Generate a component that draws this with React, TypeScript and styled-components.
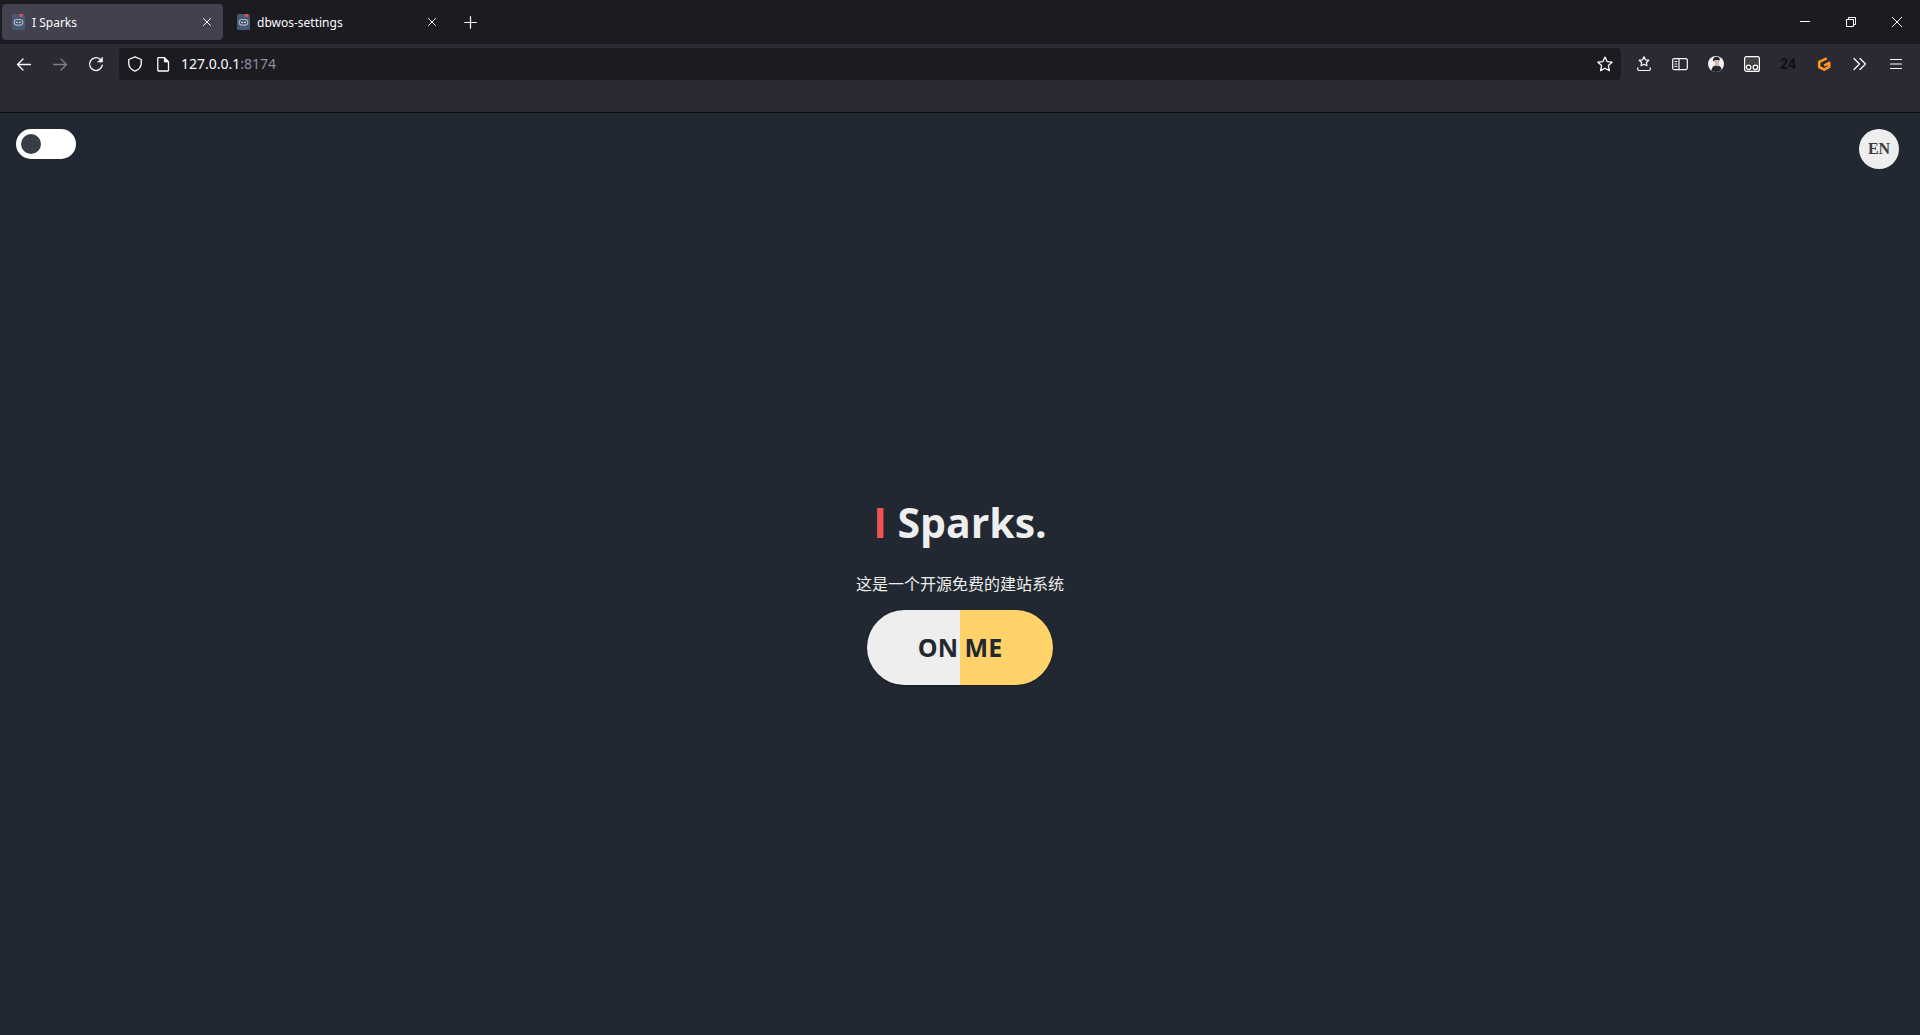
import React from "react";
import styled, { createGlobalStyle } from "styled-components";

const ui = `"Noto Sans", "Open Sans", "Noto Sans CJK SC", sans-serif`;

const GlobalStyle = createGlobalStyle`
  *, *::before, *::after { box-sizing: border-box; }
  html, body, #root { height: 100%; }
  body { margin: 0; background: #222831; font-family: ${ui}; }
  button { border: 0; padding: 0; background: none; color: inherit; font-family: inherit; cursor: pointer; }
  svg { display: block; }
`;

const Window = styled.div`
  display: flex;
  flex-direction: column;
  min-height: 100%;
`;

const TabBar = styled.header`
  display: flex;
  justify-content: space-between;
  height: 44px;
  background: #1c1b22;
  color: #fbfbfe;
`;

const Tabs = styled.div`
  display: flex;
  align-items: center;
  gap: 4px;
  padding-left: 2px;
`;

const Tab = styled.div<{ $active?: boolean }>`
  display: flex;
  align-items: center;
  width: 221px;
  height: 36px;
  padding: 0 4px 0 10px;
  gap: 7px;
  border-radius: 4px;
  background: ${(p) => (p.$active ? "#42414d" : "transparent")};
  font-size: 12px;
  line-height: 20px;
`;

const TabTitle = styled.span`
  flex: 1;
  padding-top: 2px;
`;

const IconButton = styled.button<{ $size?: number; $dim?: boolean }>`
  display: grid;
  place-items: center;
  width: ${(p) => p.$size ?? 32}px;
  height: ${(p) => p.$size ?? 32}px;
  flex: none;
  color: #fbfbfe;
  opacity: ${(p) => (p.$dim ? 0.4 : 1)};
`;

const WindowControls = styled.div`
  display: flex;
`;

const WindowButton = styled.button`
  display: grid;
  place-items: center;
  width: 46px;
  height: 44px;
`;

const NavBar = styled.nav`
  display: flex;
  align-items: flex-start;
  gap: 4px;
  height: 69px;
  padding: 4px 8px;
  background: #2b2a33;
  border-bottom: 1px solid #0c0c0d;
`;

const AddressBar = styled.div`
  display: flex;
  align-items: center;
  flex: 1;
  height: 32px;
  margin: 0 3px;
  padding: 0 2px;
  border-radius: 4px;
  background: #1c1b22;
`;

const Address = styled.a`
  flex: 1;
  padding-left: 4px;
  color: #fbfbfe;
  font-size: 14px;
  line-height: 20px;
  text-decoration: none;
`;

const Port = styled.span`
  color: #8f8f9d;
`;

const Counter = styled.span`
  color: #101014;
  font: 700 14px/20px Roboto, sans-serif;
`;

const Page = styled.main`
  display: flex;
  flex-direction: column;
  flex: 1;
  background: #222831;
`;

const PageTop = styled.div`
  display: flex;
  justify-content: space-between;
  align-items: flex-start;
  height: 56px;
  padding: 16px 21px 0 16px;
`;

const Switch = styled.input`
  appearance: none;
  display: flex;
  align-items: center;
  width: 60px;
  height: 30px;
  margin: 0;
  padding: 0 5px;
  border-radius: 15px;
  background: #fff;
  cursor: pointer;
  &::before {
    content: "";
    width: 20px;
    height: 20px;
    border-radius: 50%;
    background: #393e46;
  }
  &:checked { justify-content: flex-end; }
`;

const Language = styled.button`
  width: 40px;
  height: 40px;
  border-radius: 50%;
  background: #eee;
  color: #393e46;
  font: bold 16px/20px "Liberation Serif", serif;
`;

const Hero = styled.section`
  display: flex;
  flex-direction: column;
  align-items: center;
  justify-content: center;
  flex: 1;
  padding-bottom: 28px;
  color: #eee;
`;

const Title = styled.h1`
  margin: 0 0 20px;
  font-family: "Open Sans", sans-serif;
  font-size: 41px;
  line-height: 60px;
`;

const Accent = styled.span`
  color: #f05454;
`;

const Intro = styled.p`
  margin: 0 0 14px;
  font-size: 16px;
  line-height: 24px;
`;

const Action = styled.button`
  width: 186px;
  height: 75px;
  border-radius: 38px;
  background: linear-gradient(90deg, #eee 50%, #ffd369 50%);
  box-shadow: 0 1px 3px rgba(0, 0, 0, 0.3);
  color: #222831;
  font-family: "Open Sans", sans-serif;
  font-size: 25px;
  font-weight: 700;
`;

type StrokeProps = { size?: number; width?: number; children: React.ReactNode };

const Stroke = ({ size = 16, width = 1.3, children }: StrokeProps) => (
  <svg width={size} height={size} viewBox={`0 0 ${size} ${size}`} fill="none" stroke="currentColor"
    strokeWidth={width} strokeLinecap="round" strokeLinejoin="round" aria-hidden="true">
    {children}
  </svg>
);

const Favicon = () => (
  <svg width="13" height="16" viewBox="0 0 13 16" aria-hidden="true">
    <rect width="13" height="16" rx="1.5" fill="#475873" />
    <path d="M7.5 0h3.5v3.3L9.2 2.4 7.5 3.3z" fill="#d8504d" />
    <rect x="2.2" y="5.5" width="8.6" height="5.6" rx="2.8" fill="none" stroke="#a9b3c3" strokeWidth="1.1" />
    <path d="M4.3 8.3h1.600M7.100 8.300h1.600" stroke="#dce3ec" strokeWidth="1.300" />
  </svg>
);

const Avatar = () => (
  <svg width="16" height="16" viewBox="0 0 16 16" aria-hidden="true">
    <clipPath id="avatar"><circle cx="8" cy="8" r="8" /></clipPath>
    <g clipPath="url(#avatar)">
      <rect width="16" height="16" fill="#f4f3f2" />
      <path d="M3.500 16c-.5-3 1-5.500 3.500-6.500l3.500 0c2.500 1 3.500 3 3 6.500z" fill="#24272a" />
      <path d="M6.500 4.500h4.500v4L9.400 10.500 7 9z" fill="#d9b5a4" />
      <path d="M5.200 5.500C4.600 2.500 6 .8 8.400.8s4 1.400 3.200 4L10.500 4 7.200 4.200z" fill="#292626" />
    </g>
  </svg>
);

const GLogo = () => (
  <svg width="16" height="16" viewBox="0 0 16 16" fill="none" aria-hidden="true">
    <path d="M10.800 2.300 3.200 5.900V11L8.200 13.700 13.200 10.900V6.800L8.200 9.600" stroke="#ff981c" strokeWidth="2.600" strokeLinejoin="round" />
  </svg>
);

const CloseIcon = () => <Stroke size={8} width={1}><path d="M.5.5l7 7M7.5.5l-7 7" /></Stroke>;

export default function App() {
  return (
    <Window>
      <GlobalStyle />
      <TabBar>
        <Tabs>
          <Tab $active><Favicon /><TabTitle>I Sparks</TabTitle><IconButton $size={24} aria-label="Close tab"><CloseIcon /></IconButton></Tab>
          <Tab><Favicon /><TabTitle>dbwos-settings</TabTitle><IconButton $size={24} aria-label="Close tab"><CloseIcon /></IconButton></Tab>
          <IconButton $size={36} aria-label="New tab">
            <Stroke size={13} width={1.2}><path d="M6.500 .7v11.600M.7 6.500h11.600" /></Stroke>
          </IconButton>
        </Tabs>
        <WindowControls>
          <WindowButton aria-label="Minimize">
            <svg width="10" height="10" viewBox="0 0 10 10" shapeRendering="crispEdges"><path d="M0 4h10v1H0z" fill="#fff" /></svg>
          </WindowButton>
          <WindowButton aria-label="Restore">
            <svg width="10" height="10" viewBox="0 0 10 10" fill="none" stroke="#fff"><path d="M.5 2.5h7v7h-7zM2.5 2.5v-2h7v7h-2" /></svg>
          </WindowButton>
          <WindowButton aria-label="Close">
            <svg width="10" height="10" viewBox="0 0 10 10" stroke="#fff"><path d="M0 0l10 10M10 0L0 10" /></svg>
          </WindowButton>
        </WindowControls>
      </TabBar>

      <NavBar>
        <IconButton aria-label="Back"><Stroke><path d="M14.5 8.5h-13M7 3L1.5 8.5 7 14" /></Stroke></IconButton>
        <IconButton $dim aria-label="Forward"><Stroke><path d="M1.500 8.500h13M9 3l5.500 5.500L9 14" /></Stroke></IconButton>
        <IconButton aria-label="Reload">
          <Stroke><path d="M14.300 9.200A6.400 6.400 0 1 1 12.200 3.300" /><path d="M14.500 1.500v4.500H10z" fill="currentColor" strokeWidth=".6" /></Stroke>
        </IconButton>
        <AddressBar>
          <IconButton $size={28} aria-label="Tracking protection"><Stroke><path d="M8 .8l6.300 2.700v3.500c0 3.600-2.300 6.600-6.300 8.200C4 13.600 1.700 10.600 1.700 7V3.500z" /></Stroke></IconButton>
          <IconButton $size={28} aria-label="Site information"><Stroke><path d="M3.500 1.700h6l4 4v8.600a.7.7 0 0 1-.7.7H3.500a.7.7 0 0 1-.7-.7V2.400a.7.7 0 0 1 .7-.7z" /><path d="M9.300 1.700V6h4.200z" fill="currentColor" strokeWidth=".8" /></Stroke></IconButton>
          <Address href="#">127.0.0.1<Port>:8174</Port></Address>
          <IconButton $size={28} aria-label="Bookmark this page"><Stroke><path d="M8 1.100l2.100 4.500 5 .6-3.700 3.400 1 5L8 12.200l-4.400 2.400 1-5L.9 6.200l5-.6z" /></Stroke></IconButton>
        </AddressBar>
        <IconButton aria-label="Bookmarks menu">
          <Stroke width={1.2}><path d="M8 .800l1.500 3 3.300.4-2.400 2.300.6 3.200-3-1.500-3 1.500.6-3.200-2.400-2.300 3.300-.4zM1.800 11.800v1.400a1.300 1.300 0 0 0 1.300 1.300h9.800a1.300 1.300 0 0 0 1.300-1.300v-1.400" /></Stroke>
        </IconButton>
        <IconButton aria-label="Sidebars">
          <Stroke width={1.2}><rect x=".7" y="2.600" width="14.600" height="11" rx="1.500" /><path d="M7 2.600v11M3 5.500h1.800M3 8h1.800M3 10.500h1.800" /></Stroke>
        </IconButton>
        <IconButton aria-label="Account"><Avatar /></IconButton>
        <IconButton aria-label="Userscripts">
          <svg width="16" height="16" viewBox="0 0 16 16" stroke="#fff" aria-hidden="true">
            <rect x=".6" y=".6" width="14.800" height="14.800" rx="2" fill="#434343" strokeWidth="1.200" />
            <circle cx="4.600" cy="11.300" r="2.200" fill="#222" strokeWidth="1.300" /><circle cx="11.400" cy="11.300" r="2.200" fill="#222" strokeWidth="1.300" />
          </svg>
        </IconButton>
        <IconButton aria-label="24 items"><Counter>24</Counter></IconButton>
        <IconButton aria-label="Extension"><GLogo /></IconButton>
        <IconButton aria-label="More tools"><Stroke width={1.3}><path d="M2 2.500L7.500 8 2 13.500M8 2.500L13.500 8 8 13.500" /></Stroke></IconButton>
        <IconButton aria-label="Application menu"><Stroke width={1.2}><path d="M2.500 3.500h11M2.500 8h11M2.500 12.500h11" /></Stroke></IconButton>
      </NavBar>

      <Page>
        <PageTop>
          <Switch type="checkbox" role="switch" aria-label="Theme" />
          <Language>EN</Language>
        </PageTop>
        <Hero>
          <Title><Accent>I</Accent> Sparks.</Title>
          <Intro lang="zh-CN">这是一个开源免费的建站系统</Intro>
          <Action>ON ME</Action>
        </Hero>
      </Page>
    </Window>
  );
}
